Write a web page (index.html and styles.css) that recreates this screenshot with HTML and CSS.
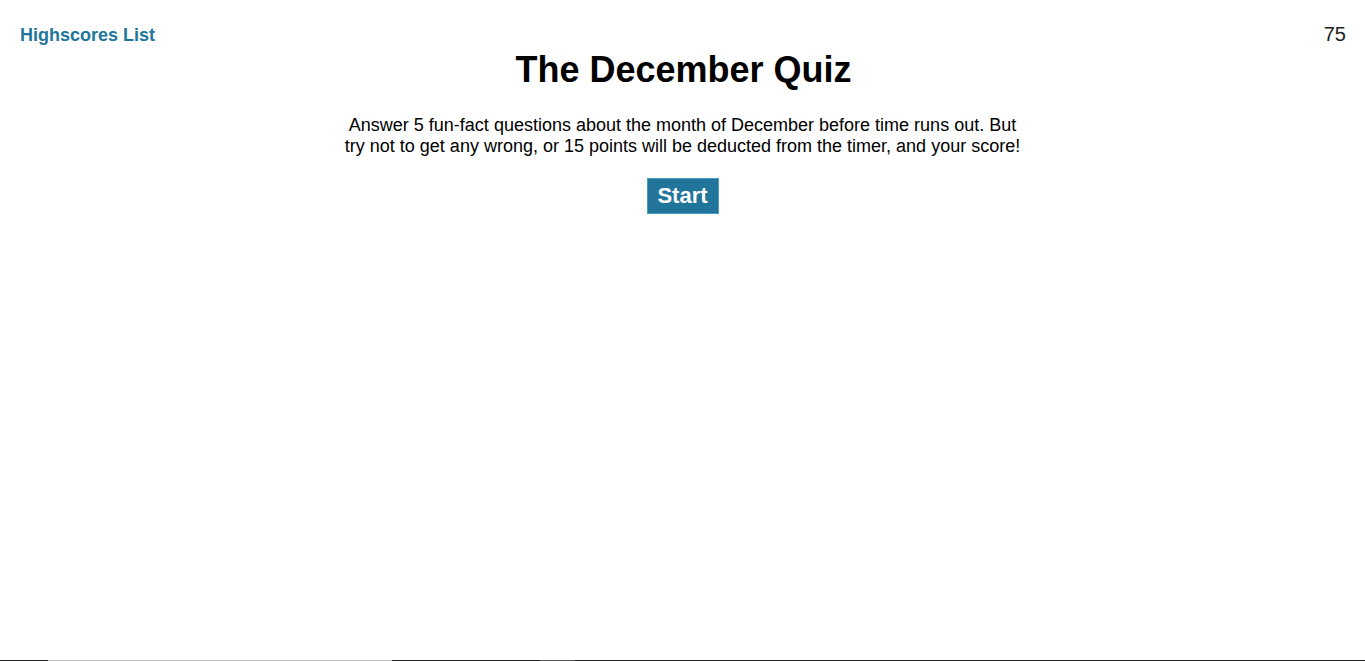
FILE: index.html
```html
<!DOCTYPE html>
<html lang="en">
<head>
<meta charset="utf-8">
<title>The December Quiz</title>
<link rel="stylesheet" href="styles.css">
</head>
<body>
<header class="topbar">
  <a class="highscores" href="#">Highscores List</a>
  <span class="timer">75</span>
</header>
<main class="quiz">
  <h1 class="title">The December Quiz</h1>
  <p class="intro">Answer 5 fun-fact questions about the month of December before time runs out. But try not to get any wrong, or 15 points will be deducted from the timer, and your score!</p>
  <button class="start" type="button">Start</button>
</main>
<div class="edge">
  <span class="seg dark s1"></span>
  <span class="seg light s2"></span>
  <span class="seg dark s3"></span>
  <span class="seg mid s4"></span>
  <span class="seg dark s5"></span>
</div>
</body>
</html>
```
FILE: styles.css
```css
html, body {
  margin: 0;
  padding: 0;
  background: #fff;
  font-family: "Liberation Sans", Arial, sans-serif;
  color: #000;
}
.topbar {
  display: flex;
  justify-content: space-between;
  align-items: flex-start;
  padding: 24px 19px 0 20px;
  height: 24px;
}
.highscores {
  color: #21769c;
  font-weight: bold;
  font-size: 18px;
  margin-top: 1px;
  text-decoration: none;
}
.timer {
  font-size: 20px;
  color: #222;
  margin-top: -1px;
}
.quiz {
  display: flex;
  flex-direction: column;
  align-items: center;
}
.title {
  font-size: 36px;
  font-weight: bold;
  margin: 1px 0 0 2px;
  line-height: 42px;
}
.intro {
  width: 686px;
  text-align: center;
  font-size: 18px;
  line-height: 21px;
  margin: 24px 0 21px;
}
.start {
  background: #21759b;
  color: #fff;
  font-family: "Liberation Sans", Arial, sans-serif;
  font-weight: bold;
  font-size: 22px;
  border: 1px solid #4a9bc0;
  padding: 4px 10px 4px 9px;
  margin-left: 1px;
  height: 36px;
  cursor: pointer;
}
.edge {
  position: fixed;
  left: 0;
  right: 0;
  bottom: 0;
  height: 1px;
  display: flex;
}
.seg { height: 1px; }
.dark { background: #222; }
.light { background: #c0c0c0; }
.mid { background: #555; }
.s1 { width: 48px; }
.s2 { width: 344px; }
.s3 { width: 148px; }
.s4 { width: 35px; }
.s5 { flex: 1; }
```
